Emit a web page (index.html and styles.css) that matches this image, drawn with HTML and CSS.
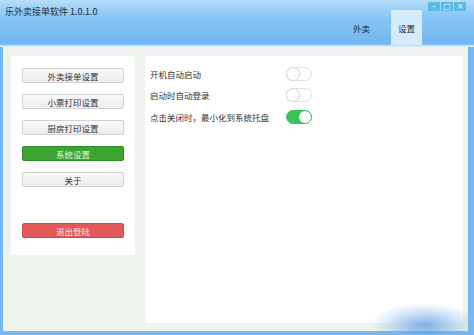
FILE: index.html
```html
<!DOCTYPE html>
<html lang="zh">
<head>
<meta charset="utf-8">
<title>乐外卖接单软件</title>
<link rel="stylesheet" href="styles.css">
</head>
<body>
<div class="window">
  <header class="titlebar">
    <div class="title">乐外卖接单软件 1.0.1.0</div>
    <nav class="tabs">
      <div class="tab">外卖</div>
      <div class="tab active">设置</div>
    </nav>
    <div class="winbtns">
      <span class="wb">&#8211;</span>
      <span class="wb">&#9633;</span>
      <span class="wb">&#215;</span>
    </div>
  </header>
  <main class="content">
    <aside class="side">
      <div class="btn">外卖接单设置</div>
      <div class="btn">小票打印设置</div>
      <div class="btn">厨房打印设置</div>
      <div class="btn green">系统设置</div>
      <div class="btn">关于</div>
      <div class="btn red">退出登陆</div>
    </aside>
    <section class="panel">
      <div class="row"><span class="label">开机自动启动</span><span class="toggle"><span class="knob"></span></span></div>
      <div class="row"><span class="label">启动时自动登录</span><span class="toggle"><span class="knob"></span></span></div>
      <div class="row"><span class="label">点击关闭时，最小化到系统托盘</span><span class="toggle on"><span class="knob"></span></span></div>
    </section>
  </main>
  <div class="watermark"></div>
</div>
</body>
</html>
```
FILE: styles.css
```css
html, body {
  margin: 0;
  padding: 0;
}
body {
  width: 474px;
  height: 335px;
  overflow: hidden;
  font-family: "Noto Sans CJK SC", "Noto Sans", sans-serif;
  font-size: 9px;
  color: #333;
}
.window {
  position: relative;
  width: 474px;
  height: 335px;
  box-sizing: border-box;
  background: #74b8ef;
  padding: 0 6px 4px 3px;
  display: flex;
  flex-direction: column;
}
.titlebar {
  position: relative;
  height: 47px;
  margin: 0 -6px 0 -3px;
  padding: 0 6px 0 3px;
  background: linear-gradient(#b7def8 0px, #9fd1f6 8px, #86c4f3 18px, #72b8f0 44px, #cfe8f8 46px, #e6f3fb 47px);
  display: flex;
  align-items: stretch;
  flex-shrink: 0;
}
.title {
  padding: 6px 0 0 2px;
  font-size: 9px;
  color: #1f2b36;
  line-height: 12px;
  flex: 1;
}
.tabs {
  display: flex;
  align-items: stretch;
  padding: 10px 0 2px;
  margin-right: 46px;
  gap: 14px;
}
.tab {
  width: 31px;
  display: flex;
  align-items: center;
  justify-content: center;
  color: #1e2a33;
  font-size: 8.5px;
}
.tab.active {
  background: #d3ebfa;
}
.winbtns {
  position: absolute;
  top: 2px;
  right: 8px;
  display: flex;
  gap: 1px;
}
.wb {
  width: 12px;
  height: 9px;
  background: #55bbe4;
  color: #eaf8ff;
  font-size: 8px;
  line-height: 9px;
  text-align: center;
  font-family: "DejaVu Sans", sans-serif;
}
.content {
  flex: 1;
  background: #eef4ed;
  display: flex;
  align-items: flex-start;
  padding: 9px 5px 8px 8px;
  gap: 10px;
}
.side {
  width: 124px;
  box-sizing: border-box;
  background: #fff;
  padding: 12px 11px 17px;
  display: flex;
  flex-direction: column;
  gap: 11px;
}
.btn {
  height: 15px;
  box-sizing: border-box;
  border: 1px solid #d2d2d2;
  border-radius: 2px;
  background: linear-gradient(#f9f9f9, #ececec);
  display: flex;
  align-items: center;
  justify-content: center;
  font-size: 8.5px;
  color: #333;
}
.btn.green {
  background: #3aa52f;
  border-color: #2f8c27;
  color: #e6f6e3;
}
.btn.red {
  margin-top: 25px;
  background: #e15959;
  border-color: #d34949;
  color: #fbe3e3;
}
.panel {
  flex: 1;
  align-self: stretch;
  background: #fff;
  padding: 7px 0 0 5px;
  display: flex;
  flex-direction: column;
}
.row {
  height: 21.5px;
  display: flex;
  align-items: center;
}
.label {
  width: 136px;
  font-size: 8.5px;
  color: #333;
}
.toggle {
  position: relative;
  width: 26px;
  height: 14px;
  box-sizing: border-box;
  border: 1px solid #e2e2e2;
  border-radius: 8px;
  background: #fff;
}
.knob {
  position: absolute;
  top: 0;
  left: 0;
  width: 12px;
  height: 12px;
  border-radius: 50%;
  background: #fff;
  box-shadow: 0 0 1px 1px #d8d8d8;
}
.toggle.on {
  background: #3cc45a;
  border-color: #3cc45a;
}
.toggle.on .knob {
  left: auto;
  right: 0;
  box-shadow: 0 0 1px #2a9a44;
}
.watermark {
  position: absolute;
  right: 4px;
  bottom: 0;
  width: 120px;
  height: 40px;
  background: radial-gradient(ellipse 55px 22px at 75px 30px, rgba(90,150,225,0.75), rgba(120,175,235,0.35) 60%, rgba(255,255,255,0) 100%);
  pointer-events: none;
}
```
